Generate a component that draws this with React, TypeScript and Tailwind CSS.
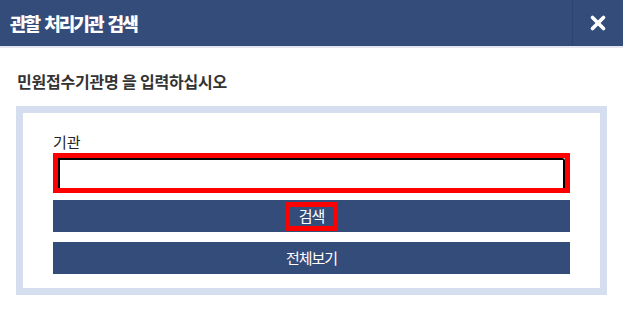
import { X } from "lucide-react";

const font = { fontFamily: '"Noto Sans CJK KR", "Noto Sans", sans-serif' };

export default function App() {
  return (
    <div className="w-[623px] h-[313px] bg-white" style={font}>
      {/* Header */}
      <div className="flex h-[48px] items-stretch bg-[#344c79] border-b-2 border-[#e4e7ee]">
        <h1 className="flex-1 flex items-center pl-[10px] text-[18px] font-black tracking-[-2px] [word-spacing:3px] text-white">
          관할 처리기관 검색
        </h1>
        <button className="w-[51px] flex items-center justify-center border-l border-[#2d4470] text-white">
          <X className="h-[22px] w-[22px]" strokeWidth={4} />
        </button>
      </div>

      <div className="px-[16px] pt-[21px]">
        <p className="pl-[1px] text-[16px] font-bold tracking-[-0.2px] text-[#333] leading-[24px]">
          민원접수기관명 을 입력하십시오
        </p>

        <div className="mt-[13px] w-[591px] border-[7px] border-[#d5deee] bg-white px-[30px] pt-[18px] pb-[14px]">
          <label className="block text-[15px] leading-[21px] text-[#222]">기관</label>
          <div className="mt-[1px] border-[5px] border-[#ff0000]">
            <input
              type="text"
              className="block h-[30px] w-full border-2 border-b-0 border-black rounded-tr-[3px] bg-white outline-none"
            />
          </div>
          <button className="mt-[7px] flex h-[32px] w-full items-center justify-center bg-[#344c79] text-white">
            <span className="flex h-[29px] items-center border-[5px] border-[#ff0000] px-[9px] text-[15px] tracking-[-1px]">
              검색
            </span>
          </button>
          <button className="mt-[10px] flex h-[32px] w-full items-center justify-center bg-[#344c79] text-[15px] tracking-[-1px] text-white">
            전체보기
          </button>
        </div>
      </div>
    </div>
  );
}
